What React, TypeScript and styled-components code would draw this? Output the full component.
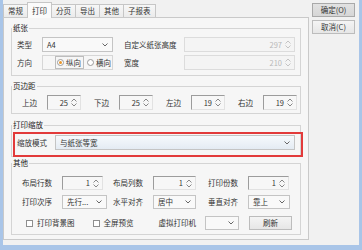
import React from 'react'
import styled, { createGlobalStyle, css } from 'styled-components'

const GlobalStyle = createGlobalStyle`
	html, body {
		margin: 0;
		padding: 0;
		background: #f0f0f0;
	}
	* {
		box-sizing: border-box;
	}
`

const font = `"Noto Sans CJK SC", "Noto Sans", sans-serif`

const Window = styled.div`
	width: 362px;
	height: 250px;
	display: flex;
	padding-top: 2px;
	background: #f1f1f1;
	border-left: 3px solid #a9c5e8;
	border-right: 3px solid #a9c5e8;
	border-bottom: 5px solid #a9c5e8;
	font-family: ${font};
	font-size: 7.5px;
	color: #333;
`

const Main = styled.div`
	width: 306px;
	display: flex;
	flex-direction: column;
`

const TabStrip = styled.div`
	display: flex;
	align-items: flex-end;
	height: 15px;
`

const Tab = styled.div<{ $active?: boolean }>`
	height: 13px;
	padding: 0 4px;
	margin-right: -1px;
	display: flex;
	align-items: center;
	border: 1px solid #c6c6c6;
	border-bottom: none;
	background: linear-gradient(#f7f7f7, #ebebeb);
	line-height: 1;
	${(p) =>
		p.$active &&
		css`
			height: 16px;
			margin-bottom: -1px;
			background: #fbfbfb;
			position: relative;
			z-index: 1;
		`}
`

const Panel = styled.div`
	height: 223px;
	border: 1px solid #c9c9c9;
	background: #f6f6f6;
	padding: 5px 7px 3px;
	display: flex;
	flex-direction: column;
`

const Group = styled.fieldset<{ $pad: string; $gap?: number }>`
	margin: ${(p) => p.$gap ?? 0}px 0 0;
	padding: ${(p) => p.$pad};
	border: 1px solid #d4d4d4;
	min-width: 0;
`

const Legend = styled.legend`
	font-size: 7.5px;
	line-height: 10px;
	padding: 0 1px;
	margin-left: -5px;
	color: #222;
`

const PaperGrid = styled.div`
	display: grid;
	grid-template-columns: 25px 71px 71px 1fr;
	grid-auto-rows: 15px;
	row-gap: 3px;
	align-items: center;
`

const Label = styled.span<{ $indent?: number; $end?: boolean }>`
	padding-left: ${(p) => p.$indent ?? 0}px;
	white-space: nowrap;
	line-height: 1;
	${(p) =>
		p.$end &&
		css`
			justify-self: end;
			padding-right: 10px;
		`}
`

const Combo = styled.div<{ $w?: number; $tone?: 'plain' | 'blue' }>`
	width: ${(p) => (p.$w ? `${p.$w}px` : 'auto')};
	flex: ${(p) => (p.$w ? 'none' : 1)};
	height: 100%;
	display: flex;
	align-items: center;
	justify-content: space-between;
	padding: 0 4px 0 4px;
	border: 1px solid #c4c4c4;
	background: ${(p) =>
		p.$tone === 'blue' ? 'linear-gradient(#f6f9fc, #e4ebf3)' : '#f9f9f9'};
	white-space: nowrap;
	line-height: 1;
`

const PrinterCombo = styled(Combo)`
	margin: 0 10px 0 9px;
`

const Spin = styled.div<{ $w?: number; $disabled?: boolean }>`
	width: ${(p) => (p.$w ? `${p.$w}px` : '100%')};
	height: 100%;
	display: flex;
	align-items: center;
	justify-content: flex-end;
	gap: 3px;
	padding: 0 3px;
	line-height: 1;
	background: #f7f7f7;
	border: 1px solid #e2e2e2;
	border-top-color: #9c9c9c;
	border-left-color: #9c9c9c;
	${(p) =>
		p.$disabled &&
		css`
			border-color: #dcdcdc;
			color: #b8b8b8;
			background: #f4f4f4;
		`}
`

const OptionBox = styled.div`
	height: 100%;
	display: flex;
	align-items: center;
	padding-left: 12px;
	gap: 1px;
	border: 1px solid #d6d6d6;
	overflow: hidden;
`

const Option = styled.div<{ $active?: boolean }>`
	height: 100%;
	flex: none;
	display: flex;
	align-items: center;
	gap: 2px;
	padding: 0 2px 0 1px;
	border: 1px solid ${(p) => (p.$active ? '#bdbdbd' : 'transparent')};
	line-height: 1;
	white-space: nowrap;
`

const Radio = styled.span<{ $on?: boolean }>`
	width: 7px;
	height: 7px;
	flex: none;
	border-radius: 50%;
	border: 1px solid #9a9a9a;
	background: #fff;
	display: flex;
	align-items: center;
	justify-content: center;
	&::after {
		content: '';
		width: 3px;
		height: 3px;
		border-radius: 50%;
		background: ${(p) => (p.$on ? '#e8962a' : 'transparent')};
	}
`

const MarginRow = styled.div`
	display: flex;
	align-items: center;
	height: 15px;
	padding-left: 5px;
	gap: 13px;
`

const Pair = styled.div`
	display: flex;
	align-items: center;
	height: 100%;
	gap: 10px;
`

const Highlight = styled.div`
	margin: 0 -8px -1px -4px;
	border: 2px solid #e23a3a;
	height: 25px;
	padding: 1px 6px 5px 2px;
	display: flex;
	align-items: center;
	gap: 8px;
`

const OtherGrid = styled.div`
	display: grid;
	grid-template-columns: 45px 45px 46px 43px 52px 42px;
	grid-template-rows: 14px 14px;
	row-gap: 5px;
	align-items: center;
`

const Cell = styled.div<{ $w: number }>`
	width: ${(p) => p.$w}px;
	height: 100%;
`

const BottomRow = styled.div`
	display: flex;
	align-items: center;
	height: 14px;
	margin-top: 7px;
	padding-left: 9px;
`

const Check = styled.label<{ $gap: number }>`
	display: flex;
	align-items: center;
	gap: 4px;
	margin-right: ${(p) => p.$gap}px;
	line-height: 1;
	white-space: nowrap;
`

const Box = styled.span`
	width: 7px;
	height: 7px;
	border: 1px solid #8e8e8e;
	background: #fff;
`

const Button = styled.div<{ $w: number; $primary?: boolean }>`
	width: ${(p) => p.$w}px;
	height: 14px;
	display: flex;
	align-items: center;
	justify-content: center;
	line-height: 1;
	border: 1px solid ${(p) => (p.$primary ? '#a9a9a9' : '#bcbcbc')};
	background: ${(p) =>
		p.$primary ? 'linear-gradient(#e2e2e2, #d6d6d6)' : 'linear-gradient(#f4f4f4, #e6e6e6)'};
	white-space: nowrap;
`

const Side = styled.div`
	display: flex;
	flex-direction: column;
	gap: 3px;
	padding: 1px 0 0 3px;
`

const Chevron = () => (
	<svg width="6" height="4" viewBox="0 0 6 4">
		<polyline points="0.5,0.5 3,3 5.5,0.5" fill="none" stroke="#666" strokeWidth="1" />
	</svg>
)

const Arrows = ({ color = '#888' }: { color?: string }) => (
	<svg width="6" height="9" viewBox="0 0 6 9">
		<polyline points="0.5,3.5 3,1 5.5,3.5" fill="none" stroke={color} strokeWidth="1" />
		<polyline points="0.5,5.5 3,8 5.5,5.5" fill="none" stroke={color} strokeWidth="1" />
	</svg>
)

const margins = [
	{ label: '上边', value: 25 },
	{ label: '下边', value: 25 },
	{ label: '左边', value: 19 },
	{ label: '右边', value: 19 },
]

const tabs = ['常规', '打印', '分页', '导出', '其他', '子报表']

export default function App() {
	return (
		<>
			<GlobalStyle />
			<Window>
				<Main>
					<TabStrip>
						{tabs.map((t) => (
							<Tab key={t} $active={t === '打印'}>
								{t}
							</Tab>
						))}
					</TabStrip>
					<Panel>
						<Group $pad="4px 5px 5px">
							<Legend>纸张</Legend>
							<PaperGrid>
								<Label>类型</Label>
								<Combo>
									A4
									<Chevron />
								</Combo>
								<Label $indent={11}>自定义纸张高度</Label>
								<Spin $disabled>
									297
									<Arrows color="#c4c4c4" />
								</Spin>
								<Label>方向</Label>
								<OptionBox>
									<Option $active>
										<Radio $on />
										纵向
									</Option>
									<Option>
										<Radio />
										横向
									</Option>
								</OptionBox>
								<Label $indent={11}>宽度</Label>
								<Spin $disabled>
									210
									<Arrows color="#c4c4c4" />
								</Spin>
							</PaperGrid>
						</Group>

						<Group $pad="4px 5px 3px" $gap={5}>
							<Legend>页边距</Legend>
							<MarginRow>
								{margins.map((m) => (
									<Pair key={m.label}>
										<Label>{m.label}</Label>
										<Spin $w={34}>
											{m.value}
											<Arrows />
										</Spin>
									</Pair>
								))}
							</MarginRow>
						</Group>

						<Group $pad="2px 5px 0" $gap={6}>
							<Legend>打印缩放</Legend>
							<Highlight>
								<Label>缩放模式</Label>
								<Combo $tone="blue">
									与纸张等宽
									<Chevron />
								</Combo>
							</Highlight>
						</Group>

						<Group $pad="8px 5px 4px" $gap={1}>
							<Legend>其他</Legend>
							<OtherGrid>
								<Label $end>布局行数</Label>
								<Cell $w={41}>
									<Spin>
										1
										<Arrows />
									</Spin>
								</Cell>
								<Label $end>布局列数</Label>
								<Cell $w={43}>
									<Spin>
										1
										<Arrows />
									</Spin>
								</Cell>
								<Label $end>打印份数</Label>
								<Cell $w={41}>
									<Spin>
										1
										<Arrows />
									</Spin>
								</Cell>
								<Label $end>打印次序</Label>
								<Combo $w={45}>
									先行...
									<Chevron />
								</Combo>
								<Label $end>水平对齐</Label>
								<Combo $w={43}>
									居中
									<Chevron />
								</Combo>
								<Label $end>垂直对齐</Label>
								<Combo $w={42}>
									靠上
									<Chevron />
								</Combo>
							</OtherGrid>
							<BottomRow>
								<Check $gap={18}>
									<Box />
									打印背景图
								</Check>
								<Check $gap={25}>
									<Box />
									全屏预览
								</Check>
								<Label>虚拟打印机</Label>
								<PrinterCombo $w={34}>
									<span />
									<Chevron />
								</PrinterCombo>
								<Button $w={43}>刷新</Button>
							</BottomRow>
						</Group>
					</Panel>
				</Main>
				<Side>
					<Button $w={43} $primary>
						确定(O)
					</Button>
					<Button $w={43}>取消(C)</Button>
				</Side>
			</Window>
		</>
	)
}
